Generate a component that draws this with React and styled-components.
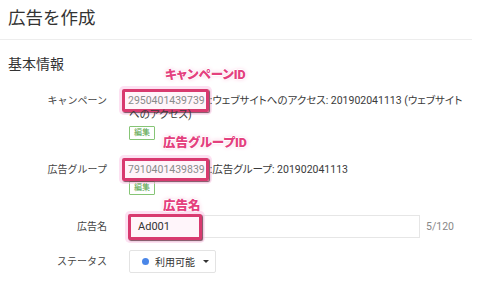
import React from "react";
import styled, { createGlobalStyle } from "styled-components";

const GlobalStyle = createGlobalStyle`
  body {
    margin: 0;
    background: #ffffff;
    font-family: Roboto, "Noto Sans CJK JP", sans-serif;
    color: #333333;
  }
`;

const Page = styled.div`
  width: 496px;
  height: 283px;
  overflow: hidden;
`;

const Header = styled.header`
  box-sizing: border-box;
  width: 472px;
  height: 40px;
  padding: 7px 8px 0;
  border-bottom: 1px solid #ededed;
`;

const Title = styled.h1`
  margin: 0;
  font-size: 17.5px;
  line-height: 22px;
  font-weight: 400;
  color: #333333;
`;

const Section = styled.section`
  padding: 0 8px;
`;

const SectionTitle = styled.h2`
  margin: 14px 0 0;
  font-size: 14px;
  line-height: 20px;
  font-weight: 400;
  color: #333333;
`;

const FieldRow = styled.div`
  display: grid;
  grid-template-columns: 99px 342px;
  column-gap: 22px;
  align-items: ${({ $center }) => ($center ? "center" : "start")};
  margin-top: ${({ $mt }) => $mt}px;
`;

const Label = styled.div`
  text-align: right;
  font-size: 10px;
  line-height: 14px;
  color: #444444;
`;

const Value = styled.div`
  font-size: 10.5px;
  line-height: 14px;
  color: #3a3a3a;
  font-feature-settings: "palt";
`;

const Highlight = styled.span`
  margin-left: -7px;
  margin-right: 1px;
  padding: 2px 1px 2px 3px;
  border: 3px solid #d83a6f;
  border-radius: 2px;
  background: rgba(255, 225, 240, 0.35);
  color: #8a8a8a;
  box-shadow: 1px 1px 1px rgba(70, 20, 35, 0.7), 0 0 0 3px rgba(252, 200, 232, 0.55);
`;

const Anchor = styled.span`
  position: relative;
`;

const InputHighlight = styled.div`
  position: relative;
  box-sizing: border-box;
  display: flex;
  align-items: center;
  width: 74px;
  height: 26px;
  margin: -2px 0 -2px -2px;
  padding-left: 7px;
  border: 3px solid #d83a6f;
  border-radius: 2px;
  background: #fff5fa;
  box-shadow: 1px 1px 1px rgba(70, 20, 35, 0.7), 0 0 0 3px rgba(252, 200, 232, 0.55);
`;

const Annotation = styled.span`
  position: absolute;
  left: ${({ $x }) => $x}px;
  bottom: calc(100% + ${({ $lift }) => $lift}px);
  white-space: nowrap;
  font-size: 12.5px;
  line-height: 14px;
  font-weight: 900;
  color: #e4407e;
  font-feature-settings: "palt";
  text-shadow: -1px 0 #fff, 1px 0 #fff, 0 -1px #fff, 0 1px #fff,
    0 0 4px #f6b3d4;
`;

const EditButton = styled.button`
  display: block;
  box-sizing: border-box;
  height: 14px;
  margin-top: 4px;
  padding: 0 4px;
  border: 1px solid #86c576;
  border-radius: 1px;
  background: #ffffff;
  color: #4f9e3f;
  font-family: inherit;
  font-size: 8px;
  line-height: 12px;
`;

const InputRow = styled.div`
  display: flex;
  align-items: center;
`;

const InputBox = styled.div`
  box-sizing: border-box;
  display: flex;
  align-items: center;
  width: 291px;
  height: 23px;
  border: 1px solid #e6e6e6;
  font-size: 11px;
  color: #333333;
`;

const Counter = styled.span`
  margin-left: 6px;
  font-size: 10.5px;
  color: #888888;
`;

const Select = styled.div`
  box-sizing: border-box;
  display: inline-flex;
  align-items: center;
  width: 87px;
  height: 23px;
  padding-left: 12px;
  border: 1px solid #e3e3e3;
  border-radius: 2px;
  font-size: 10px;
  color: #333333;
`;

const Dot = styled.span`
  width: 7px;
  height: 7px;
  border-radius: 50%;
  background: #4a86e8;
`;

const SelectText = styled.span`
  margin-left: 6px;
`;

const Caret = styled.span`
  margin-left: 8px;
  border-left: 3px solid transparent;
  border-right: 3px solid transparent;
  border-top: 3.5px solid #333333;
`;

export default function App() {
  return (
    <Page>
      <GlobalStyle />
      <Header>
        <Title>広告を作成</Title>
      </Header>
      <Section>
        <SectionTitle>基本情報</SectionTitle>

        <FieldRow $mt={20}>
          <Label>キャンペーン</Label>
          <div>
            <Value>
              <Highlight>
                <Anchor>
                  <Annotation $x={37} $lift={12}>キャンペーンID</Annotation>
                </Anchor>
                2950401439739
              </Highlight>
              :ウェブサイトへのアクセス: 201902041113 (ウェブサイトへのアクセス)
            </Value>
            <EditButton>編集</EditButton>
          </div>
        </FieldRow>

        <FieldRow $mt={23}>
          <Label>広告グループ</Label>
          <div>
            <Value>
              <Highlight>
                <Anchor>
                  <Annotation $x={35} $lift={13}>広告グループID</Annotation>
                </Anchor>
                7910401439839
              </Highlight>
              :広告グループ: 201902041113
            </Value>
            <EditButton>編集</EditButton>
          </div>
        </FieldRow>

        <FieldRow $mt={20} $center>
          <Label>広告名</Label>
          <InputRow>
            <InputBox>
              <InputHighlight>
                Ad001
                <Annotation $x={32} $lift={4}>広告名</Annotation>
              </InputHighlight>
            </InputBox>
            <Counter>5/120</Counter>
          </InputRow>
        </FieldRow>

        <FieldRow $mt={12} $center>
          <Label>ステータス</Label>
          <div>
            <Select>
              <Dot />
              <SelectText>利用可能</SelectText>
              <Caret />
            </Select>
          </div>
        </FieldRow>
      </Section>
    </Page>
  );
}
